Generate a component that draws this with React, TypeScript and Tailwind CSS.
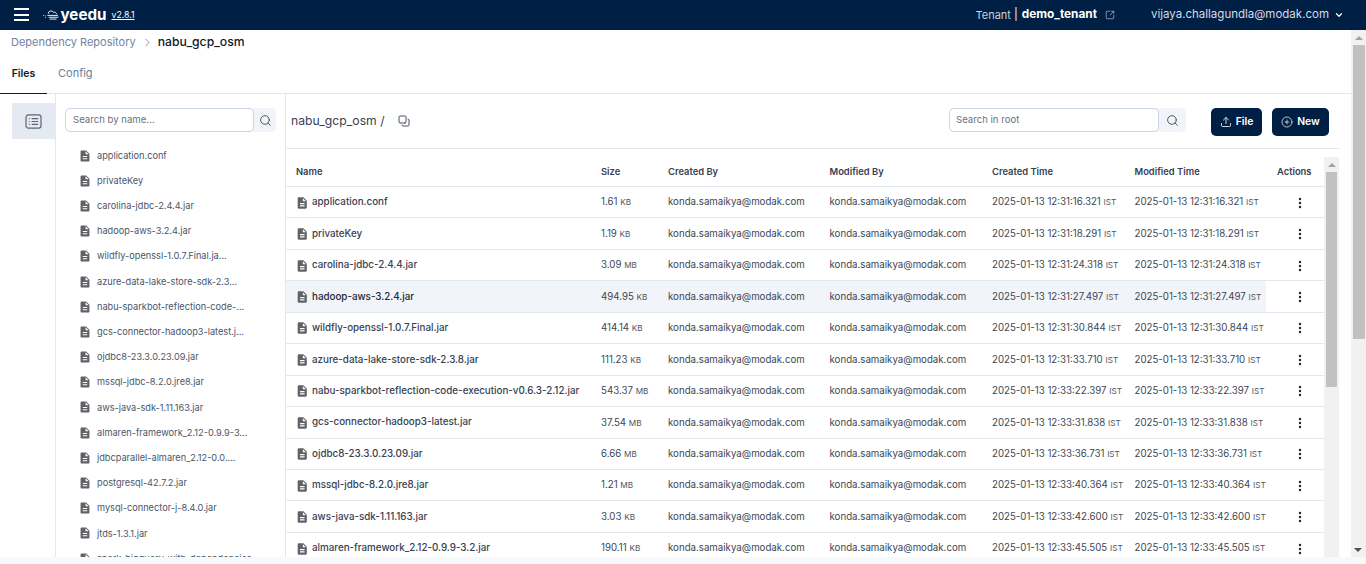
import React from "react";
import { Search, Copy, Upload, CirclePlus, ChevronDown, ChevronRight, SquareArrowOutUpRight, EllipsisVertical } from "lucide-react";

const FONT = "font-['Inter','Noto_Sans',sans-serif]";

const sideFiles = [
  "application.conf",
  "privateKey",
  "carolina-jdbc-2.4.4.jar",
  "hadoop-aws-3.2.4.jar",
  "wildfly-openssl-1.0.7.Final.ja...",
  "azure-data-lake-store-sdk-2.3...",
  "nabu-sparkbot-reflection-code-...",
  "gcs-connector-hadoop3-latest.j...",
  "ojdbc8-23.3.0.23.09.jar",
  "mssql-jdbc-8.2.0.jre8.jar",
  "aws-java-sdk-1.11.163.jar",
  "almaren-framework_2.12-0.9.9-3...",
  "jdbcparallel-almaren_2.12-0.0....",
  "postgresql-42.7.2.jar",
  "mysql-connector-j-8.4.0.jar",
  "jtds-1.3.1.jar",
  "spark-bigquery-with-dependencies",
];

const rows: [string, string, string, string][] = [
  ["application.conf", "1.61", "KB", "2025-01-13 12:31:16.321"],
  ["privateKey", "1.19", "KB", "2025-01-13 12:31:18.291"],
  ["carolina-jdbc-2.4.4.jar", "3.09", "MB", "2025-01-13 12:31:24.318"],
  ["hadoop-aws-3.2.4.jar", "494.95", "KB", "2025-01-13 12:31:27.497"],
  ["wildfly-openssl-1.0.7.Final.jar", "414.14", "KB", "2025-01-13 12:31:30.844"],
  ["azure-data-lake-store-sdk-2.3.8.jar", "111.23", "KB", "2025-01-13 12:31:33.710"],
  ["nabu-sparkbot-reflection-code-execution-v0.6.3-2.12.jar", "543.37", "MB", "2025-01-13 12:33:22.397"],
  ["gcs-connector-hadoop3-latest.jar", "37.54", "MB", "2025-01-13 12:33:31.838"],
  ["ojdbc8-23.3.0.23.09.jar", "6.66", "MB", "2025-01-13 12:33:36.731"],
  ["mssql-jdbc-8.2.0.jre8.jar", "1.21", "MB", "2025-01-13 12:33:40.364"],
  ["aws-java-sdk-1.11.163.jar", "3.03", "KB", "2025-01-13 12:33:42.600"],
  ["almaren-framework_2.12-0.9.9-3.2.jar", "190.11", "KB", "2025-01-13 12:33:45.505"],
];

function FileIcon({ className }: { className: string }) {
  return (
    <svg viewBox="3 1.5 18 21" className={className} fill="currentColor">
      <path d="M14 2H6c-1.1 0-2 .9-2 2v16c0 1.1.9 2 2 2h12c1.1 0 2-.9 2-2V8l-6-6zm2 16H8v-2h8v2zm0-4H8v-2h8v2zm-3-5V3.5L18.5 9H13z" />
    </svg>
  );
}

function Cloud() {
  return (
    <svg viewBox="0 0 18 12" className="h-[11px] w-[18px] text-white" fill="none" stroke="currentColor" strokeWidth="1">
      <path d="M6 5.2a3 3 0 0 1 5.6-1.6 2.4 2.4 0 0 1 3.4 2.1" />
      <path d="M5 7h11.5M6.5 9h10c.4 0 .5-.3.5-.5M7.5 11h7.5" />
      <path d="M0.5 7h2.5M2.5 9h2" strokeDasharray="1 1" />
    </svg>
  );
}

function Time({ t }: { t: string }) {
  return (
    <span className="whitespace-nowrap text-[9.7px] text-[#3d4654]">
      {t} <span className="text-[8.2px] text-[#4b5563]">IST</span>
    </span>
  );
}

const COLS = "grid-cols-[305px_67px_161.5px_162.5px_142.5px_142.5px_1fr]";

export default function App() {
  return (
    <div className={`${FONT} flex h-[564px] w-[1366px] flex-col overflow-hidden bg-white`}>
      <header className="flex h-[30px] shrink-0 items-center justify-between bg-[#001f45] pl-[14px] pr-[22px] text-white">
        <div className="flex items-center">
          <div className="flex w-[15px] flex-col gap-[3.5px]">
            <span className="h-[2px] bg-white" />
            <span className="h-[2px] bg-white" />
            <span className="h-[2px] bg-white" />
          </div>
          <div className="ml-[13px]"><Cloud /></div>
          <span className="ml-[0.5px] text-[15.2px] font-bold leading-none">yeedu</span>
          <span className="ml-[5px] pt-[1px] text-[8.7px] underline">v2.8.1</span>
        </div>
        <div className="flex items-center">
          <span className="text-[11px] text-[#c9d1dc]">Tenant</span>
          <span className="ml-[3px] text-[11.5px]">|</span>
          <span className="ml-[4px] text-[11.8px] font-bold">demo_tenant</span>
          <SquareArrowOutUpRight className="ml-[8px] h-[10px] w-[10px] text-[#c9d1dc]" strokeWidth={1.5} />
          <span className="ml-[36px] text-[11.5px] text-[#d5dbe4]">vijaya.challagundla@modak.com</span>
          <ChevronDown className="ml-[5px] h-[10px] w-[10px]" strokeWidth={3} />
        </div>
      </header>

      <div className="relative flex min-h-0 flex-1 flex-col">
        <div className="flex h-[25px] shrink-0 items-center pl-[11px] pr-[14px] text-[11px]">
          <span className="text-[#7184a0]">Dependency Repository</span>
          <ChevronRight className="ml-[5px] mr-[4px] h-[13px] w-[13px] text-[#7184a0]" strokeWidth={1.5} />
          <span className="text-[12.2px] font-medium text-[#111827]">nabu_gcp_osm</span>
        </div>

        <div className="mr-[14px] flex h-[39px] shrink-0 border-b-[1px] border-[#e2e8f0]">
          <div className="-mb-px flex w-[47px] items-center justify-center border-b-[1px] border-[#001f45] text-[10.5px] font-semibold text-[#111827]">Files</div>
          <div className="ml-[11px] flex items-center pb-[2px] text-[11px] text-[#6b7f99]">Config</div>
        </div>

        <div className="mr-[14px] flex min-h-0 flex-1 overflow-hidden">
          <div className="w-[55px] shrink-0 pl-[12px] pt-[9px]">
            <div className="flex h-[36px] w-[43px] items-center justify-center bg-[#e4e9f2]">
              <svg viewBox="0 0 18 16" className="h-[15px] w-[17px] text-[#5b6675]" fill="none" stroke="currentColor" strokeWidth="1.3">
                <rect x="1" y="1" width="16" height="14" rx="2.5" />
                <path d="M7 5h7M7 8h7M7 11h7M4 5h1M4 8h1M4 11h1" />
              </svg>
            </div>
          </div>

          <aside className="flex w-[231px] shrink-0 flex-col overflow-hidden border-x-[1px] border-[#e2e8f0]">
            <div className="flex h-[50px] shrink-0 items-start pl-[9px] pr-[9px] pt-[14px]">
              <div className="flex h-[24px] w-full rounded-[5px] bg-[#f1f4f9]">
                <div className="flex w-[189px] items-center rounded-[5px] border-[1px] border-[#cbd5e1] bg-white pl-[7px] text-[9.6px] text-[#6b7280]">Search by name...</div>
                <div className="flex flex-1 items-center justify-center">
                  <Search className="h-[13px] w-[13px] text-[#475569]" strokeWidth={1.8} />
                </div>
              </div>
            </div>
            <div className="-mt-[1px] min-h-0 flex-1 pl-[24px]">
              {sideFiles.map((f) => (
                <div key={f} className="flex h-[25.2px] items-center">
                  <FileIcon className="h-[12px] w-[10px] shrink-0 text-[#5f6368]" />
                  <span className="ml-[7px] whitespace-nowrap text-[9.2px] text-[#4a5568]">{f}</span>
                </div>
              ))}
            </div>
          </aside>

          <main className="flex min-w-0 flex-1 flex-col">
            <div className="mr-[13px] flex h-[55px] shrink-0 items-start border-b-[1px] border-[#e2e8f0] pl-[5px] pr-[10px] pt-[14px]">
              <span className="mt-[4px] text-[12.2px] text-[#374151]">nabu_gcp_osm /</span>
              <Copy className="ml-[13px] mt-[7px] h-[12px] w-[12px] rotate-180 text-[#374151]" strokeWidth={1.8} />
              <div className="ml-auto flex h-[24px] w-[237px] rounded-[5px] bg-[#f1f4f9]">
                <div className="flex w-[210px] items-center rounded-[5px] border-[1px] border-[#cbd5e1] bg-white pl-[6px] text-[9.6px] text-[#6b7280]">Search in root</div>
                <div className="flex flex-1 items-center justify-center">
                  <Search className="h-[13px] w-[13px] text-[#475569]" strokeWidth={1.8} />
                </div>
              </div>
              <button className="ml-[25px] flex h-[28px] w-[51px] items-center justify-center gap-[4px] rounded-[5px] bg-[#001f45] text-[10.4px] font-semibold text-white">
                <Upload className="h-[12px] w-[12px]" strokeWidth={1.6} />File
              </button>
              <button className="ml-[10px] flex h-[28px] w-[57px] items-center justify-center gap-[4px] rounded-[5px] bg-[#001f45] text-[10.4px] font-semibold text-white">
                <CirclePlus className="h-[12px] w-[12px]" strokeWidth={1.4} />New
              </button>
            </div>

            <div className="relative min-h-0 flex-1 pr-[28px]">
              <div className={`grid h-[38px] ${COLS} items-center border-b-[1px] border-[#e2e8f0] pl-[10px] pt-[9px] text-[9.4px] font-semibold text-[#374151]`}>
                <span>Name</span><span>Size</span><span>Created By</span><span>Modified By</span><span>Created Time</span><span>Modified Time</span><span>Actions</span>
              </div>
              {rows.map(([name, size, unit, time]) => {
                const active = name === "hadoop-aws-3.2.4.jar";
                return (
                  <div key={name} className={`grid h-[31.45px] ${COLS} items-center border-b-[1px] border-[#e2e8f0] pl-[10px] pt-[1px] text-[9.7px] ${active ? "bg-[linear-gradient(to_right,#f1f4f9_980px,transparent_980px)]" : ""}`}>
                    <span className={`flex items-center whitespace-nowrap text-[9.8px] font-medium ${active ? "text-[#1f2937]" : "text-[#374151]"}`}>
                      <FileIcon className="ml-[1px] mr-[4.5px] h-[12px] w-[10.5px] shrink-0 text-[#5f6368]" />{name}
                    </span>
                    <span className="whitespace-nowrap text-[#3d4654]">{size} <span className="text-[8.2px] text-[#4b5563]">{unit}</span></span>
                    <span className="whitespace-nowrap text-[#3d4654]">konda.samaikya@modak.com</span>
                    <span className="whitespace-nowrap text-[#3d4654]">konda.samaikya@modak.com</span>
                    <Time t={time} />
                    <Time t={time} />
                    <span className="flex justify-start pl-[16px]">
                      <EllipsisVertical className="h-[14px] w-[14px] text-[#1f2937]" strokeWidth={2.2} />
                    </span>
                  </div>
                );
              })}
              <div className="absolute right-[13px] top-[8px] bottom-0 w-[15px] bg-[#f1f1f1] pl-[2px]">
                <div className="flex h-[15px] w-[11px] items-center justify-center">
                  <span className="h-0 w-0 border-x-[4px] border-b-[4px] border-x-transparent border-b-[#a3a3a3]" />
                </div>
                <div className="h-[215px] w-[11px] bg-[#c1c1c1]" />
              </div>
            </div>
          </main>
        </div>

        <div className="absolute bottom-[7px] right-0 top-0 w-[15px] bg-[#f1f1f1] pl-[2px]">
          <div className="flex h-[15px] w-[12px] items-center justify-center">
            <span className="h-0 w-0 border-x-[4px] border-b-[4px] border-x-transparent border-b-[#a3a3a3]" />
          </div>
          <div className="h-[294px] w-[12px] bg-[#c1c1c1]" />
          <div className="absolute bottom-[5px] left-[3px] h-0 w-0 border-x-[4px] border-t-[4px] border-x-transparent border-t-[#505050]" />
        </div>
        <div className="h-[7px] shrink-0 bg-[#f8f9fb]" />
      </div>
    </div>
  );
}
